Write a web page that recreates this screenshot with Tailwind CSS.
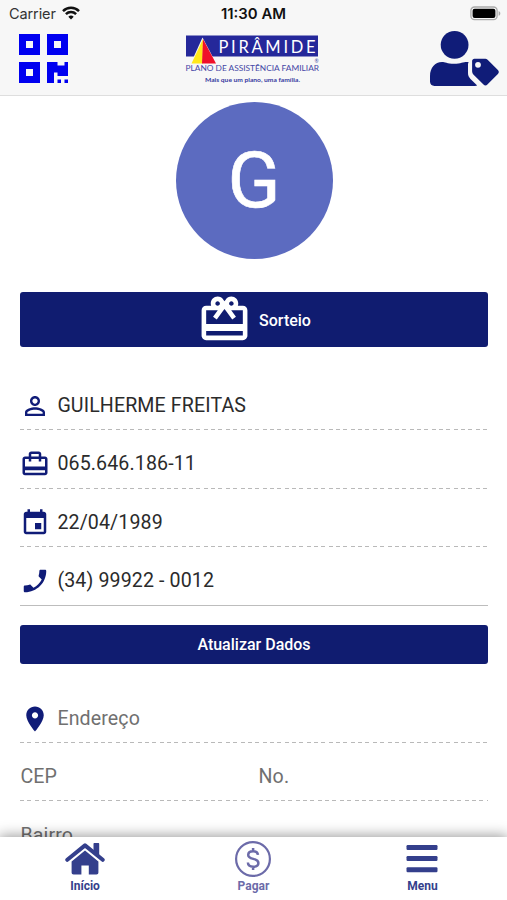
<!DOCTYPE html>
<html lang="pt-BR">
  <head>
    <meta charset="UTF-8" />
    <meta name="viewport" content="width=device-width, initial-scale=1.0" />
    <script src="https://cdn.jsdelivr.net/npm/@tailwindcss/browser@4"></script>
    <title>Perfil</title>
  </head>
  <body class="bg-white font-[Roboto,sans-serif] text-[#2b2b2b]">
    <div class="relative w-[507px] h-[900px] overflow-hidden">
      <header class="h-24 bg-[#f7f7f7] border-b border-[#dedede]">
        <!-- status bar -->
        <div class="h-7 grid grid-cols-3 items-center font-[Inter,sans-serif] text-[14.5px] leading-7">
          <div class="flex items-center gap-[6px] pl-[9px] text-[#333]">
            <span class="w-[47px] whitespace-nowrap tracking-[-0.1px]">Carrier</span>
            <svg class="w-[18px] h-[14px] -mt-[2px]" viewBox="0 0 18 14" fill="none" stroke="#111" stroke-width="2.5">
              <path d="M1 5.1a11.4 11.4 0 0 1 16 0" />
              <path d="M3.9 8.1a7.3 7.3 0 0 1 10.2 0" />
              <path d="M9 13.6 6.3 10.8a3.9 3.9 0 0 1 5.4 0z" fill="#111" stroke="none" />
            </svg>
          </div>
          <div class="text-center font-semibold text-[14.9px] text-[#111] whitespace-nowrap">11:30 AM</div>
          <div class="flex justify-end pr-[6px]">
            <svg class="w-[31px] h-[15px] -mt-[2px]" viewBox="0 0 31 15">
              <rect x=".9" y="1" width="26.2" height="12.6" rx="3.6" fill="#f7f7f7" stroke="#aaa" stroke-width="1.3" />
              <rect x="2.6" y="2.7" width="22.8" height="9.2" rx="2" fill="#000" />
              <path d="M28.6 5v4.8c1-.4 1.7-1.3 1.7-2.4S29.6 5.4 28.6 5z" fill="#aaa" />
            </svg>
          </div>
        </div>
        <div class="h-[67px] flex justify-between pl-[18.6px] pr-[7px]">
          <svg class="w-[49px] h-[49px] mt-[6px]" viewBox="0 32 448 448" fill="#0000f0">
            <path d="M0 224h192V32H0v192zM64 96h64v64H64V96zm192-64v192h192V32H256zm128 128h-64V96h64v64zM0 480h192V288H0v192zm64-128h64v64H64v-64zm352-64h32v128h-96v-32h-32v96h-64V288h96v32h64v-32zm0 160h32v32h-32v-32zm-64 0h32v32h-32v-32z" />
          </svg>
          <svg class="w-[136px] h-[56px] mt-[5px] ml-[8px]" viewBox="0 0 136 56">
            <rect x="2" y="2.5" width="132" height="21" fill="#25289a" />
            <path d="M18.5 4.5 6.5 31h26z" fill="#f7f7f7" />
            <path d="M19 6 7.5 30.5h11z" fill="#ffe81a" />
            <path d="M19 6 18 30.5h14z" fill="#f0102a" />
            <text x="34.5" y="19.6" textLength="97" font-family="Lato, sans-serif" font-size="16.5" fill="#fff">PIRÂMIDE</text>
            <text x="1.5" y="38.2" textLength="133.5" lengthAdjust="spacingAndGlyphs" font-family="Lato, sans-serif" font-size="7.6" fill="#4648a6">PLANO DE ASSISTÊNCIA FAMILIAR</text>
            <text x="130.5" y="29.8" font-family="Lato, sans-serif" font-size="5" fill="#4648a6">®</text>
            <text x="21" y="49.2" textLength="95" lengthAdjust="spacingAndGlyphs" font-family="Lato, sans-serif" font-size="6" font-weight="700" fill="#3538a0">Mais que um plano, uma família.</text>
          </svg>
          <svg class="w-[71px] h-[56px] mt-[2px]" viewBox="0 0 71 56" fill="#101c78">
            <circle cx="25.6" cy="14.8" r="13.9" />
            <path d="M13 32c3 0 5 1.7 12 1.7S34 32 38 32h1.600c-.5 1-.6 2-.6 3v8c0 2.500.8 4 2.500 6l6.700 6.500c-.8.300-1.400.400-2.200.400H5.500C2.700 55.900 1 54 1 51.500V46c0-8 5-14 12-14z" />
            <path transform="translate(.4 -.4)" fill-rule="evenodd" d="M45 29.200h10c1.500 0 2.700.4 3.700 1.400l9.800 9.900c1.200 1.200 1.200 2.700 0 3.900L58 55c-1.200 1.200-2.700 1.200-3.900 0l-9.900-9.900c-1-1-1.500-2.200-1.500-3.700v-9.900c0-1.300 1-2.300 2.300-2.300zM48.600 32.300a2.900 2.900 0 1 0 0 5.800 2.900 2.900 0 0 0 0-5.800z" />
          </svg>
        </div>
      </header>

      <main class="pl-[20.4px] pr-[19.4px]">
        <div class="mt-[6px] mx-auto w-[157px] h-[157px] rounded-full bg-[#5c6bc0] flex items-center justify-center text-white text-[78px] leading-none">
          <span class="[-webkit-text-stroke:0.6px_white]">G</span>
        </div>

        <button class="mt-[33px] w-full h-[55px] rounded-[3px] bg-[#101c70] text-white text-base font-medium flex items-center justify-center gap-[7px]">
          <svg class="w-[55px] h-[55px]" viewBox="0 0 24 24" fill="currentColor">
            <path d="M20 6h-2.180c.110-.310.180-.650.180-1 0-1.660-1.340-3-3-3-1.050 0-1.960.540-2.500 1.350l-.5.670-.5-.680C10.960 2.540 10.050 2 9 2 7.340 2 6 3.340 6 5c0 .350.070.690.180 1H4c-1.110 0-1.990.890-1.990 2L2 19c0 1.110.890 2 2 2h16c1.110 0 2-.890 2-2V8c0-1.110-.890-2-2-2zm-5-2c.550 0 1 .450 1 1s-.450 1-1 1-1-.450-1-1 .450-1 1-1zM9 4c.550 0 1 .450 1 1s-.450 1-1 1-1-.450-1-1 .450-1 1-1zm11 15H4v-2h16v2zm0-5H4V8h5.080L7 10.830 8.620 12 11 8.760l1-1.360 1 1.360L15.380 12 17 10.830 14.920 8H20v6z" />
          </svg>
          <span class="pt-[2px]">Sorteio</span>
        </button>

        <div class="mt-[35px] text-[19.6px] tracking-[0.12px]">
          <div class="h-[47px] flex items-center gap-[7px]">
            <svg class="w-[30px] h-[30px] -ml-[0.5px] mr-[0.5px]" viewBox="0 0 24 24" fill="#101c78">
              <path d="M12 5.900c1.160 0 2.100.940 2.100 2.100s-.940 2.100-2.100 2.100S9.900 9.160 9.900 8s.940-2.100 2.100-2.100m0 9c2.970 0 6.100 1.460 6.100 2.100v1.100H5.900V17c0-.640 3.130-2.100 6.100-2.100M12 4C9.790 4 8 5.790 8 8s1.790 4 4 4 4-1.790 4-4-1.790-4-4-4zm0 9c-2.670 0-8 1.340-8 4v3h16v-3c0-2.660-5.330-4-8-4z" />
            </svg>
            <span>GUILHERME FREITAS</span>
          </div>
          <div class="h-px bg-[repeating-linear-gradient(90deg,#b9b9b9_0_4px,transparent_4px_7.35px)]"></div>
          <div class="mt-[10.5px] h-[47px] flex items-center gap-[7px]">
            <svg class="w-[30px] h-[30px] -ml-[0.5px] mr-[0.5px]" viewBox="0 0 24 24" fill="#101c78">
              <path d="M20 6h-3V4c0-1.110-.890-2-2-2H9c-1.110 0-2 .890-2 2v2H4c-1.110 0-2 .890-2 2v11c0 1.110.890 2 2 2h16c1.110 0 2-.890 2-2V8c0-1.110-.890-2-2-2zM9 4h6v2H9V4zm11 15H4v-2h16v2zm0-5H4V8h3v2h2V8h6v2h2V8h3v6z" />
            </svg>
            <span>065.646.186-11</span>
          </div>
          <div class="h-px bg-[repeating-linear-gradient(90deg,#b9b9b9_0_4px,transparent_4px_7.35px)]"></div>
          <div class="mt-[10.5px] h-[47px] flex items-center gap-[7px]">
            <svg class="w-[30px] h-[30px] -ml-[0.5px] mr-[0.5px]" viewBox="0 0 24 24" fill="#101c78">
              <path d="M17 12h-5v5h5v-5zM16 1v2H8V1H6v2H5c-1.110 0-1.990.900-1.990 2L3 19c0 1.100.890 2 2 2h14c1.100 0 2-.900 2-2V5c0-1.100-.900-2-2-2h-1V1h-2zm3 18H5V8h14v11z" />
            </svg>
            <span>22/04/1989</span>
          </div>
          <div class="h-px bg-[repeating-linear-gradient(90deg,#b9b9b9_0_4px,transparent_4px_7.35px)]"></div>
          <div class="mt-[10.5px] h-[47px] flex items-center gap-[7px]">
            <svg class="w-[30px] h-[30px] -ml-[0.5px] mr-[0.5px]" viewBox="0 0 24 24" fill="#101c78">
              <path transform="matrix(-1 0 0 1 24 0)" d="M6.620 10.790c1.440 2.830 3.760 5.140 6.590 6.590l2.200-2.200c.270-.270.670-.360 1.020-.240 1.120.370 2.330.570 3.570.570.550 0 1 .450 1 1V20c0 .550-.450 1-1 1-9.390 0-17-7.610-17-17 0-.550.450-1 1-1h3.500c.550 0 1 .450 1 1 0 1.250.200 2.450.570 3.570.110.350.030.740-.250 1.020l-2.200 2.200z" />
            </svg>
            <span>(34) 99922 - 0012</span>
          </div>
          <div class="h-px bg-[#bdbdbd]"></div>
        </div>

        <button class="mt-[19.5px] w-full h-[39px] rounded-[3px] bg-[#101c70] text-white text-base font-medium flex items-center justify-center">Atualizar Dados</button>

        <div class="mt-[31px] text-[19.6px] tracking-[0.12px] text-[#707070]">
          <div class="h-[47px] flex items-center gap-[7px]">
            <svg class="w-[30px] h-[30px] -ml-[0.5px] mr-[0.5px]" viewBox="0 0 24 24" fill="#101c78">
              <path d="M12 2C8.130 2 5 5.130 5 9c0 5.250 7 13 7 13s7-7.750 7-13c0-3.870-3.130-7-7-7zm0 9.500c-1.380 0-2.500-1.120-2.500-2.500s1.120-2.500 2.500-2.500 2.500 1.120 2.500 2.500-1.120 2.500-2.500 2.500z" />
            </svg>
            <span>Endereço</span>
          </div>
          <div class="h-px bg-[repeating-linear-gradient(90deg,#b9b9b9_0_4px,transparent_4px_7.35px)]"></div>
          <div class="mt-[10px] grid grid-cols-2 gap-[9px]">
            <div>
              <div class="h-[47px] flex items-center pt-px">CEP</div>
              <div class="h-px bg-[repeating-linear-gradient(90deg,#b9b9b9_0_4px,transparent_4px_7.35px)]"></div>
            </div>
            <div>
              <div class="h-[47px] flex items-center pt-px">No.</div>
              <div class="h-px bg-[repeating-linear-gradient(90deg,#b9b9b9_0_4px,transparent_4px_7.35px)]"></div>
            </div>
          </div>
          <div class="mt-[11px] h-[47px] flex items-center">Bairro</div>
        </div>
      </main>

      <nav class="absolute inset-x-0 bottom-0 h-[63px] bg-white shadow-[0_0_13px_1px_rgba(0,0,0,0.42)] grid grid-cols-3 text-[12px] font-bold text-[#343f8c]">
        <a class="flex flex-col items-center">
          <svg class="mt-[5px] w-[40px] h-[33px] ml-px" viewBox="0 0 40 33" fill="#343f8c">
            <path d="M20 8.600 33.400 19.500V30.500c0 1.300-.7 2-2 2h-7.600v-9h-7.400v9H8.600c-1.300 0-2-.7-2-2V19.500z" />
            <path d="M28.500 2c0-.6.4-1 1-1h3.700c.6 0 1 .4 1 1v12l-5.700-4.700z" />
            <path d="M2.300 17.800 20 3.400l17.700 14.400" fill="none" stroke="#343f8c" stroke-width="4" stroke-linecap="round" stroke-linejoin="round" />
          </svg>
          <span class="leading-[23px] ml-px">Início</span>
        </a>
        <a class="flex flex-col items-center text-[#6c6ba9]">
          <svg class="mt-[3px] w-[38px] h-[38px] -ml-px" viewBox="0 0 38 38" fill="none" stroke="#6c6ba9">
            <circle cx="19" cy="19" r="16.9" stroke-width="2.2" />
            <path d="M24 14.900c-.4-2.500-2.200-3.700-4.900-3.700-2.900 0-4.900 1.500-4.900 3.700 0 5.300 10.200 2.600 10.200 8 0 2.300-2.100 3.800-5.200 3.800-3.200 0-5.200-1.500-5.300-4.200M19.100 8v3.200M19.100 26.700V30" stroke-width="2.500" />
          </svg>
          <span class="leading-[17px]">Pagar</span>
        </a>
        <a class="flex flex-col items-center">
          <svg class="mt-[7px] w-[32px] h-[29px] mr-px" viewBox="0 0 32 29" fill="#343f8c">
            <rect x=".5" y="1" width="31" height="5" rx="1.2" />
            <rect x=".5" y="12" width="31" height="5" rx="1.2" />
            <rect x=".5" y="23.2" width="31" height="5" rx="1.2" />
          </svg>
          <span class="leading-[27px]">Menu</span>
        </a>
      </nav>
    </div>
  </body>
</html>
